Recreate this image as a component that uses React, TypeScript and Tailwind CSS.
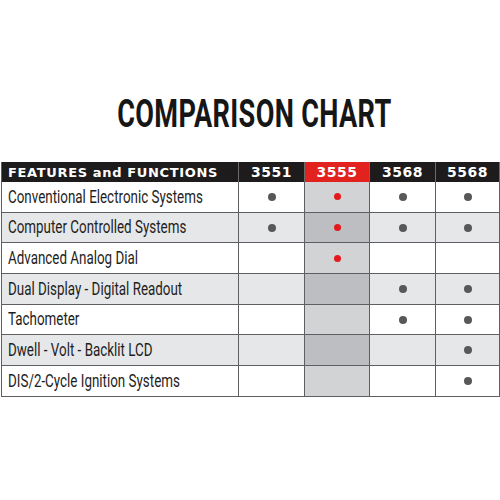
import React from "react";

type Mark = 0 | 1;
const rows: { label: string; m: Mark[] }[] = [
  { label: "Conventional Electronic Systems", m: [1, 1, 1, 1] },
  { label: "Computer Controlled Systems", m: [1, 1, 1, 1] },
  { label: "Advanced Analog Dial", m: [0, 1, 0, 0] },
  { label: "Dual Display - Digital Readout", m: [0, 0, 1, 1] },
  { label: "Tachometer", m: [0, 0, 1, 1] },
  { label: "Dwell - Volt - Backlit LCD", m: [0, 0, 0, 1] },
  { label: "DIS/2-Cycle Ignition Systems", m: [0, 0, 0, 1] },
];

const models = ["3551", "3555", "3568", "5568"];

export default function App() {
  return (
    <div className="w-[500px] h-[500px] bg-white overflow-hidden">
      <div className="pt-[92px] flex justify-center pl-[8px]">
        <span
          className="inline-block text-[39px] leading-[44px] font-bold text-[#161616] scale-x-[0.695] tracking-[0.5px]"
          style={{ fontFamily: "Roboto, sans-serif" }}
        >
          COMPARISON CHART
        </span>
      </div>
      <div className="mt-[26px] ml-[1px] w-[499px] border-l border-[#5e5f62]">
        <div className="grid grid-cols-[237px_66px_65px_66px_64px] h-[20px] bg-[#1d1b1c]">
          <div className="flex items-center pl-[6px] border-r border-[#6b6b6b]">
            <span
              className="text-[13px] font-bold text-white tracking-[0.65px]"
              style={{ fontFamily: "'DejaVu Sans', sans-serif" }}
            >
              FEATURES and FUNCTIONS
            </span>
          </div>
          {models.map((n, i) => (
            <div
              key={n}
              className={
                i === 1
                  ? "flex items-center justify-center bg-[#e2221f] border-r border-[#6b6b6b]"
                  : "flex items-center justify-center border-r border-[#6b6b6b]"
              }
            >
              <span
                className="text-[14px] font-bold text-white tracking-[0.5px]"
                style={{ fontFamily: "'DejaVu Sans', sans-serif" }}
              >
                {n}
              </span>
            </div>
          ))}
        </div>
        {rows.map((r, ri) => {
          const alt = ri % 2 === 1;
          return (
            <div
              key={r.label}
              className={
                "grid grid-cols-[237px_66px_65px_66px_64px] h-[30.7px] border-b border-[#5e5f62] " +
                (alt ? "bg-[#e6e7e9]" : "bg-white")
              }
            >
              <div className="flex items-center pl-[6px] border-r border-[#5e5f62] overflow-visible">
                <span
                  className="inline-block origin-left scale-x-[0.765] whitespace-nowrap text-[17.5px] text-[#1e1e1e]"
                  style={{ fontFamily: "Roboto, sans-serif" }}
                >
                  {r.label}
                </span>
              </div>
              {r.m.map((v, ci) => (
                <div
                  key={ci}
                  className={
                    "flex items-center justify-center border-r border-[#5e5f62] " +
                    (ci === 1 ? (alt ? "bg-[#bdbec1]" : "bg-[#d2d3d5]") : "")
                  }
                >
                  {v === 1 && (
                    <span
                      className={
                        ci === 1
                          ? "block w-[7px] h-[7px] rounded-full bg-[#e3191c]"
                          : "block w-[8px] h-[8px] rounded-full bg-[#58585a]"
                      }
                    />
                  )}
                </div>
              ))}
            </div>
          );
        })}
      </div>
    </div>
  );
}
